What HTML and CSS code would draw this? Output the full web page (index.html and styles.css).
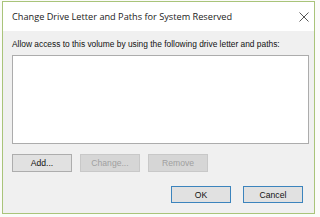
FILE: index.html
```html
<!DOCTYPE html>
<html lang="en">
<head>
    <meta charset="UTF-8">
    <title>Change Drive Letter and Paths for System Reserved</title>
    <link rel="stylesheet" href="styles.css">
</head>
<body>
    <div class="dialog">
        <div class="title-bar">
            <span class="title">Change Drive Letter and Paths for System Reserved</span>
            <span class="close">
                <svg width="10" height="10" viewBox="0 0 10 10">
                    <path d="M0.5 0.5 L9.5 9.5 M9.5 0.5 L0.5 9.5" stroke="#444" stroke-width="0.9"/>
                </svg>
            </span>
        </div>
        <div class="dialog-body">
            <p class="label">Allow access to this volume by using the following drive letter and paths:</p>
            <div class="path-list"></div>
            <div class="row">
                <button class="btn">Add...</button>
                <button class="btn" disabled>Change...</button>
                <button class="btn" disabled>Remove</button>
            </div>
            <div class="row footer">
                <button class="btn default">OK</button>
                <button class="btn default">Cancel</button>
            </div>
        </div>
    </div>
</body>
</html>
```
FILE: styles.css
```css
* {
    margin: 0;
    padding: 0;
    box-sizing: border-box;
}

body {
    background-color: #fbfbf9;
    font-family: 'Liberation Sans', Arial, sans-serif;
    font-size: 8px;
    color: #1a1a1a;
}

.dialog {
    margin: 1px 0 0 2px;
    width: 313px;
    height: 213px;
    border: 1px solid #a9c47a;
    background-color: #f0f0f0;
    display: flex;
    flex-direction: column;
}

.title-bar {
    height: 29px;
    background-color: #fff;
    display: flex;
    align-items: center;
    justify-content: space-between;
    padding: 0 2px 0 9px;
}

.title {
    font-family: 'Open Sans', 'Noto Sans', sans-serif;
    font-size: 9.2px;
    color: #222;
}

.close {
    display: flex;
    padding: 0 3px;
}

.dialog-body {
    flex: 1;
    padding: 8px 5px 0 9px;
}

.label {
    font-size: 8.4px;
    line-height: 10px;
    color: #111;
}

.path-list {
    margin-top: 6px;
    height: 89px;
    width: 297px;
    background-color: #fff;
    border: 1px solid #acacac;
}

.row {
    display: flex;
    gap: 8px;
    margin-top: 10px;
}

.btn {
    width: 60px;
    height: 18px;
    font-family: inherit;
    font-size: 8.6px;
    color: #111;
    background-color: #e1e1e1;
    border: 1px solid #adadad;
}

.btn:disabled {
    color: #a0a0a0;
    background-color: #d6d6d6;
    border-color: #c8c8c8;
}

.footer {
    justify-content: flex-end;
    gap: 12px;
    margin-top: 14px;
    padding-right: 6px;
}

.btn.default {
    height: 17px;
    border-color: #3c84bd;
}
```
